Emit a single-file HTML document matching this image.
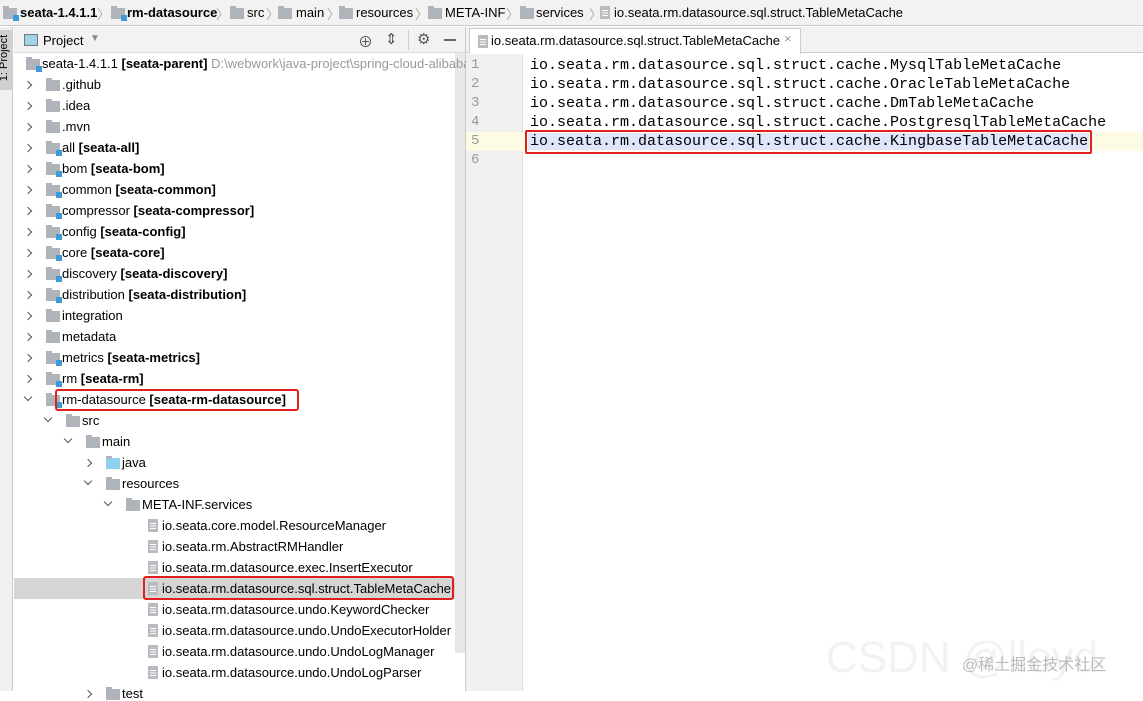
<!DOCTYPE html><html><head><meta charset="utf-8"><style>
*{margin:0;padding:0;box-sizing:border-box}
body{width:1143px;height:691px;overflow:hidden;background:#fff;font-family:"Liberation Sans","Noto Sans CJK SC",sans-serif;font-size:13px;color:#000;position:relative}
.a{position:absolute;white-space:nowrap}
.fd{position:absolute;width:14px;height:11px;background:#aeb4ba}
.fd:before{content:"";position:absolute;left:0;top:-2px;width:6px;height:3px;background:#aeb4ba}
.mod:after{content:"";position:absolute;right:-2px;bottom:-2px;width:6px;height:6px;background:#3d9bd6}
.chev{position:absolute;width:6px;height:6px;border-right:1.5px solid #555;border-bottom:1.5px solid #555}
.r{transform:rotate(-45deg)}.d{transform:rotate(45deg)}
.fi{position:absolute;width:10px;height:13px;background:#b8bcc0}
.fi:after{content:"";position:absolute;left:2px;top:4px;width:6px;height:6px;background:repeating-linear-gradient(#fff 0 1px,transparent 1px 2.5px)}
b{font-weight:bold}
.code{position:absolute;left:530px;font-family:"Liberation Mono",monospace;font-size:15px;line-height:19px}
.ln{position:absolute;left:471px;font-family:"Liberation Mono",monospace;font-size:14px;color:#999;line-height:19px}
</style></head><body>
<div class="a" style="left:0;top:0;width:1143px;height:26px;background:#f2f2f2;border-bottom:1px solid #c9c9c9"></div>
<div class="fd mod" style="left:3px;top:8px"></div><div class="a" style="left:20px;top:5px;font-weight:bold">seata-1.4.1.1</div>
<div class="a" style="left:97px;top:4px;color:#aaa">〉</div>
<div class="fd mod" style="left:111px;top:8px"></div><div class="a" style="left:127px;top:5px;font-weight:bold">rm-datasource</div>
<div class="a" style="left:216px;top:4px;color:#aaa">〉</div>
<div class="fd" style="left:230px;top:8px"></div><div class="a" style="left:247px;top:5px">src</div>
<div class="a" style="left:266px;top:4px;color:#aaa">〉</div>
<div class="fd" style="left:278px;top:8px"></div><div class="a" style="left:296px;top:5px">main</div>
<div class="a" style="left:327px;top:4px;color:#aaa">〉</div>
<div class="fd" style="left:339px;top:8px"></div><div class="a" style="left:356px;top:5px">resources</div>
<div class="a" style="left:415px;top:4px;color:#aaa">〉</div>
<div class="fd" style="left:428px;top:8px"></div><div class="a" style="left:445px;top:5px">META-INF</div>
<div class="a" style="left:506px;top:4px;color:#aaa">〉</div>
<div class="fd" style="left:520px;top:8px"></div><div class="a" style="left:536px;top:5px">services</div>
<div class="a" style="left:589px;top:4px;color:#aaa">〉</div>
<div class="fi" style="left:600px;top:6px"></div><div class="a" style="left:614px;top:5px">io.seata.rm.datasource.sql.struct.TableMetaCache</div>
<div class="a" style="left:0;top:27px;width:13px;height:664px;background:#f0f0f0;border-right:1px solid #c9c9c9"></div>
<div class="a" style="left:0;top:30px;width:13px;height:60px;background:#d0d0d0"></div>
<div class="a" style="left:-19px;top:52px;transform:rotate(-90deg);font-size:11px">1: Project</div>
<div class="a" style="left:14px;top:27px;width:452px;height:26px;background:#f2f2f2;border-bottom:1px solid #ddd"></div>
<div class="a" style="left:24px;top:34px;width:14px;height:12px;border:1px solid #777;background:#9fd3ea"></div>
<div class="a" style="left:43px;top:33px">Project</div>
<div class="a" style="left:90px;top:33px;color:#888;font-size:10px">▼</div>
<div class="a" style="left:358px;top:31px;font-size:15px;color:#555">⊕</div>
<div class="a" style="left:385px;top:30px;font-size:15px;color:#555">⇕</div>
<div class="a" style="left:408px;top:30px;width:1px;height:20px;background:#ccc"></div>
<div class="a" style="left:417px;top:30px;font-size:15px;color:#555">⚙</div>
<div class="a" style="left:444px;top:39px;width:12px;height:2px;background:#666"></div>
<div class="a" style="left:455px;top:53px;width:10px;height:600px;background:#e8e8e8"></div>
<div class="a" style="left:465px;top:27px;width:1px;height:664px;background:#c9c9c9"></div>
<div class="a" style="left:14px;top:578px;width:441px;height:21px;background:#d5d5d5"></div>
<div id="tree"></div>
<div class="a" style="left:466px;top:27px;width:677px;height:26px;background:#f2f2f2;border-bottom:1px solid #ccc"></div>
<div class="a" style="left:469px;top:28px;width:332px;height:26px;background:#fff;border:1px solid #ccc;border-bottom:none"></div>
<div class="fi" style="left:478px;top:35px"></div>
<div class="a" style="left:491px;top:33px">io.seata.rm.datasource.sql.struct.TableMetaCache</div>
<div class="a" style="left:784px;top:31px;color:#999">×</div>
<div class="a" style="left:466px;top:54px;width:57px;height:637px;background:#f0f0f0;border-right:1px solid #ddd"></div>
<div class="a" style="left:466px;top:132px;width:677px;height:19px;background:#fefbe5"></div>
<div class="a" style="left:528px;top:133px;width:561px;height:17px;background:#dfe6fb"></div>
<div class="ln" style="top:56px">1<br>2<br>3<br>4<br>5<br>6</div>
<div class="code" style="top:56px">io.seata.rm.datasource.sql.struct.cache.MysqlTableMetaCache<br>io.seata.rm.datasource.sql.struct.cache.OracleTableMetaCache<br>io.seata.rm.datasource.sql.struct.cache.DmTableMetaCache<br>io.seata.rm.datasource.sql.struct.cache.PostgresqlTableMetaCache<br>io.seata.rm.datasource.sql.struct.cache.KingbaseTableMetaCache</div>
<div class="a" style="left:525px;top:130px;width:567px;height:24px;border:2px solid #e0201d;border-radius:2px"></div>
<div class="a" style="left:826px;top:633px;font-size:44px;color:#f2f2f2">CSDN @lloyd</div>
<div class="a" style="left:962px;top:651px;font-size:16px;color:#bbb">@稀土掘金技术社区</div>
<script>
var rows=[
[0,'n','fd mod','seata-1.4.1.1 <b>[seata-parent]</b> <span style="color:#999">D:\\webwork\\java-project\\spring-cloud-alibaba</span>'],
[0,'r','fd','.github'],[0,'r','fd','.idea'],[0,'r','fd','.mvn'],
[0,'r','fd mod','all <b>[seata-all]</b>'],[0,'r','fd mod','bom <b>[seata-bom]</b>'],
[0,'r','fd mod','common <b>[seata-common]</b>'],[0,'r','fd mod','compressor <b>[seata-compressor]</b>'],
[0,'r','fd mod','config <b>[seata-config]</b>'],[0,'r','fd mod','core <b>[seata-core]</b>'],
[0,'r','fd mod','discovery <b>[seata-discovery]</b>'],[0,'r','fd mod','distribution <b>[seata-distribution]</b>'],
[0,'r','fd','integration'],[0,'r','fd','metadata'],[0,'r','fd mod','metrics <b>[seata-metrics]</b>'],
[0,'r','fd mod','rm <b>[seata-rm]</b>'],[0,'d','fd mod','rm-datasource <b>[seata-rm-datasource]</b>'],
[1,'d','fd','src'],[2,'d','fd','main'],[3,'r','fd j','java'],[3,'d','fd','resources'],[4,'d','fd','META-INF.services'],
[5,'n','fi','io.seata.core.model.ResourceManager'],[5,'n','fi','io.seata.rm.AbstractRMHandler'],
[5,'n','fi','io.seata.rm.datasource.exec.InsertExecutor'],[5,'n','fi','io.seata.rm.datasource.sql.struct.TableMetaCache'],
[5,'n','fi','io.seata.rm.datasource.undo.KeywordChecker'],[5,'n','fi','io.seata.rm.datasource.undo.UndoExecutorHolder'],
[5,'n','fi','io.seata.rm.datasource.undo.UndoLogManager'],[5,'n','fi','io.seata.rm.datasource.undo.UndoLogParser'],
[3,'r','fd','test']];
var h='';rows.forEach(function(r,i){var y=63+21*i,x=20*r[0];
if(i==0)x=-20;
if(r[1]!='n')h+='<div class="chev '+r[1]+'" style="left:'+(25+x)+'px;top:'+(y-(r[1]=='d'?5:2))+'px"></div>';
var c=r[2];var st=c.indexOf('j')>0?'background:#8fd0ef;':'';
if(c.indexOf('fi')==0)h+='<div class="fi" style="left:'+(148-100+x)+'px;top:'+(y-6)+'px"></div>';
else h+='<div class="'+c.replace(' j','')+'" style="'+st+'left:'+(46+x)+'px;top:'+(y-4)+'px"></div>';
h+='<div class="a" style="left:'+(62+x)+'px;top:'+(y-7)+'px">'+r[3]+'</div>';});
h+='<div class="a" style="left:55px;top:389px;width:244px;height:22px;border:2px solid #e0201d;border-radius:3px"></div>';
h+='<div class="a" style="left:143px;top:576px;width:311px;height:24px;border:2px solid #e0201d;border-radius:3px"></div>';
document.getElementById('tree').innerHTML=h;
</script>
</body></html>
